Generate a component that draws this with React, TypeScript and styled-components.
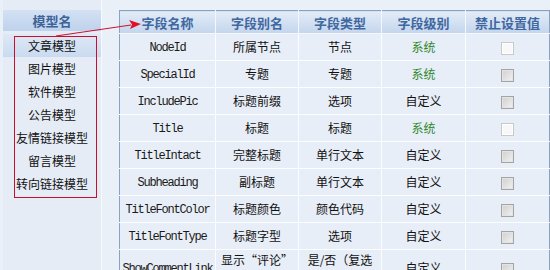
import React from "react";
import styled, { createGlobalStyle } from "styled-components";

const GlobalStyle = createGlobalStyle`
  html, body { margin: 0; padding: 0; background: #eaf0f8; overflow: hidden; }
  body { font-family: "Noto Sans CJK SC", "Liberation Sans", sans-serif; }
`;

const Page = styled.div`
  position: relative;
  display: flex;
  align-items: flex-start;
  width: 550px;
  height: 270px;
  padding-left: 3px;
  box-sizing: border-box;
`;

const Side = styled.div`
  width: 100px;
  height: 270px;
  padding-top: 10px;
  box-sizing: border-box;
  border-right: 1px solid #f6f9fd;
  background: #e6ecf6;
  display: flex;
  flex-direction: column;
`;

const SideHeader = styled.div`
  height: 21px;
  line-height: 21px;
  margin-bottom: 3px;
  text-align: center;
  font-size: 13px;
  font-weight: bold;
  color: #3d6399;
  background: linear-gradient(#d3e1f3, #bed2ec);
`;

const SideItem = styled.div<{ $active?: boolean }>`
  height: 23px;
  line-height: 23px;
  text-align: center;
  font-size: 12px;
  color: #111;
  background: ${(p) => (p.$active ? "linear-gradient(#dfe9f6, #c9daf0)" : "transparent")};
`;

const Main = styled.div`
  padding: 10px 0 0 17px;
`;

const Table = styled.table`
  border-collapse: collapse;
  table-layout: fixed;
  width: 427px;
  border: 1px solid #8aa2c2;
  background: #e8eef7;
`;

const Th = styled.th<{ $w: number }>`
  width: ${(p) => p.$w}px;
  height: 22px;
  padding: 0;
  font-size: 13px;
  font-weight: bold;
  color: #3f68a0;
  text-align: center;
  background: linear-gradient(#e3ecf7, #c3d5ed);
  border-left: 1px solid #f4f8fc;
  border-bottom: 1px solid #f4f8fc;
  &:first-child { border-left: none; }
`;

const Td = styled.td`
  height: 26px;
  padding: 0;
  text-align: center;
  font-size: 12px;
  color: #111;
  border-left: 1px solid #fbfdff;
  border-bottom: 1px solid #fbfdff;
  line-height: 16px;
  &:first-child { border-left: none; }
`;

const Code = styled.span`
  font-family: "Liberation Mono", monospace;
  font-size: 12px;
  letter-spacing: -1.2px;
  color: #1a1a1a;
`;

const Level = styled.span<{ $system?: boolean }>`
  color: ${(p) => (p.$system ? "#2d8a2d" : "#111")};
`;

const Check = styled.span<{ $light?: boolean }>`
  display: inline-block;
  vertical-align: middle;
  width: 11px;
  height: 11px;
  border: 1px solid ${(p) => (p.$light ? "#c9c9c9" : "#a4a4a4")};
  background: ${(p) => (p.$light ? "#f8f8f8" : "linear-gradient(135deg, #cfcfcf, #f2f2f2)")};
  box-shadow: inset 0 0 0 1px ${(p) => (p.$light ? "#ffffff" : "#e4e4e4")};
`;

const RedBox = styled.div`
  position: absolute;
  left: 14px;
  top: 36px;
  width: 81px;
  height: 160px;
  border: 1px solid #c8102e;
  pointer-events: none;
`;

const Arrow = styled.svg`
  position: absolute;
  left: 0;
  top: 0;
  pointer-events: none;
`;

const Lines = styled.div`
  white-space: nowrap;
  padding: 2px 0;
`;

type Row = { name: string; alias: string[]; type: string[]; system: boolean };

const rows: Row[] = [
  { name: "NodeId", alias: ["所属节点"], type: ["节点"], system: true },
  { name: "SpecialId", alias: ["专题"], type: ["专题"], system: true },
  { name: "IncludePic", alias: ["标题前缀"], type: ["选项"], system: false },
  { name: "Title", alias: ["标题"], type: ["标题"], system: true },
  { name: "TitleIntact", alias: ["完整标题"], type: ["单行文本"], system: false },
  { name: "Subheading", alias: ["副标题"], type: ["单行文本"], system: false },
  { name: "TitleFontColor", alias: ["标题颜色"], type: ["颜色代码"], system: false },
  { name: "TitleFontType", alias: ["标题字型"], type: ["选项"], system: false },
  { name: "ShowCommentLink", alias: ["显示“评论”", "链接"], type: ["是/否（复选", "框）"], system: false },
];

const models = ["文章模型", "图片模型", "软件模型", "公告模型", "友情链接模型", "留言模型", "转向链接模型"];

function Multi({ lines }: { lines: string[] }) {
  if (lines.length === 1) return <>{lines[0]}</>;
  return (
    <Lines>
      {lines.map((l, i) => (
        <div key={i}>{l}</div>
      ))}
    </Lines>
  );
}

export default function App() {
  return (
    <>
      <GlobalStyle />
      <Page>
        <Side>
          <SideHeader>模型名</SideHeader>
          {models.map((m, i) => (
            <SideItem key={m} $active={i === 0}>
              {m}
            </SideItem>
          ))}
        </Side>
        <Main>
          <Table>
            <thead>
              <tr>
                <Th $w={95}>字段名称</Th>
                <Th $w={82}>字段别名</Th>
                <Th $w={82}>字段类型</Th>
                <Th $w={83}>字段级别</Th>
                <Th $w={83}>禁止设置值</Th>
              </tr>
            </thead>
            <tbody>
              {rows.map((r) => (
                <tr key={r.name}>
                  <Td>
                    <Code>{r.name}</Code>
                  </Td>
                  <Td>
                    <Multi lines={r.alias} />
                  </Td>
                  <Td>
                    <Multi lines={r.type} />
                  </Td>
                  <Td>
                    <Level $system={r.system}>{r.system ? "系统" : "自定义"}</Level>
                  </Td>
                  <Td>
                    <Check $light={r.name === "NodeId" || r.name === "Title"} />
                  </Td>
                </tr>
              ))}
            </tbody>
          </Table>
        </Main>
        <RedBox />
        <Arrow width="550" height="270" viewBox="0 0 550 270">
          <line x1="56" y1="36" x2="131" y2="25" stroke="#d0102a" strokeWidth="1" />
          <polygon points="129,20 141,24 130,29 132,24.5" fill="#e0102a" />
        </Arrow>
      </Page>
    </>
  );
}
